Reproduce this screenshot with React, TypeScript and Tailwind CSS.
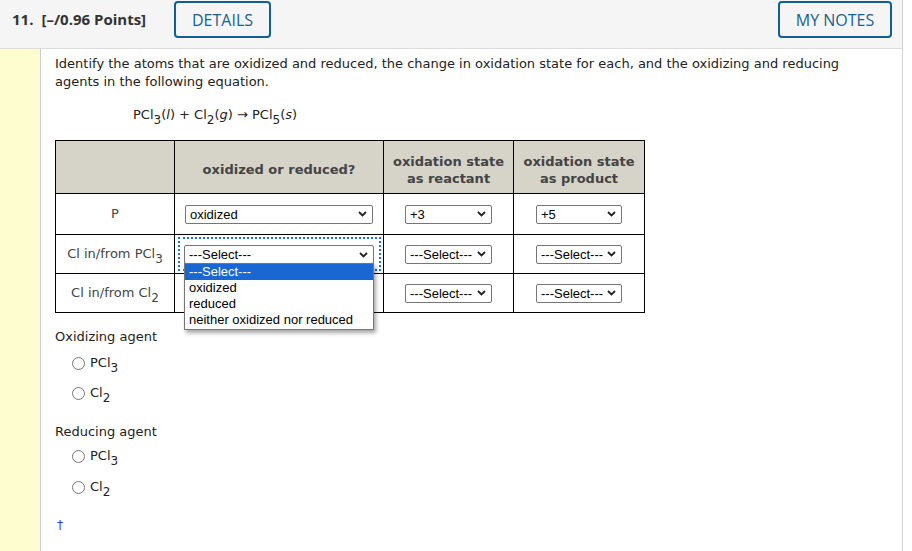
import React from "react";

const Chevron = () => (
  <svg width="9" height="6" viewBox="0 0 9 6" className="shrink-0">
    <path d="M1 1 L4.5 4.5 L8 1" fill="none" stroke="#222" strokeWidth="1.8" />
  </svg>
);

const Sub = ({ children }: { children: React.ReactNode }) => (
  <sub className="text-[12px] top-[5px] leading-none">{children}</sub>
);

function Sel({ value, w }: { value: string; w: string }) {
  return (
    <div
      className={`${w} h-[19px] border border-[#767676] rounded-[2px] bg-white flex items-center justify-between pl-[4px] pr-[5px] font-['Liberation_Sans'] text-[13px] leading-none text-black`}
    >
      <span>{value}</span>
      <Chevron />
    </div>
  );
}

const Radio = () => (
  <span className="inline-block w-[13px] h-[13px] rounded-full border border-[#767676] bg-white" />
);

export default function App() {
  return (
    <div className="w-[912px] h-[551px] bg-white overflow-hidden">
      <div className="w-[903px] h-full border-r border-[#d4d4d4] flex flex-col">
        {/* header */}
        <div className="h-[49px] shrink-0 bg-[#f5f5f5] border-b border-[#dcdcdc] flex items-start pt-[1px] pr-[10px] font-['Open_Sans']">
          <div className="w-[174px] h-[37px] flex items-center pl-[12px] text-[15px] font-bold text-[#333]">
            <span>11.</span>
            <span className="ml-[8px]">[–/0.96 Points]</span>
          </div>
          <button className="w-[97px] h-[37px] border-2 border-[#0e6196] rounded-[4px] bg-[#f5f5f5] text-[16px] text-[#1d5f8c] flex items-center justify-center">
            DETAILS
          </button>
          <div className="flex-1" />
          <button className="w-[114px] h-[37px] border-2 border-[#0e6196] rounded-[4px] bg-[#f5f5f5] text-[16px] text-[#1d5f8c] flex items-center justify-center">
            MY NOTES
          </button>
        </div>
        {/* body */}
        <div className="flex flex-1">
          <div className="w-[41px] shrink-0 bg-[#fefdd0] border-r border-[#cfcfcf]" />
          <div className="flex-1 pl-[14px] pt-[6px] text-[13px] leading-[18px] text-[#222] font-['DejaVu_Sans']">
            <p className="w-[800px]">
              Identify the atoms that are oxidized and reduced, the change in oxidation state for each, and the oxidizing and reducing agents in the following equation.
            </p>
            <div className="mt-[15px] pl-[78px]">
              PCl<Sub>3</Sub>(<i>l</i>) + Cl<Sub>2</Sub>(<i>g</i>) → PCl<Sub>5</Sub>(<i>s</i>)
            </div>
            <table className="mt-[16px] border-collapse table-fixed w-[590px] text-[#444]">
              <colgroup>
                <col className="w-[119px]" />
                <col className="w-[209px]" />
                <col className="w-[130px]" />
                <col className="w-[131px]" />
              </colgroup>
              <thead>
                <tr className="h-[53px] bg-[#d6d3c9]">
                  <th className="border border-black"></th>
                  <th className="border border-black font-bold text-[13px] leading-[17px] text-[#444] pt-[5px]">oxidized or reduced?</th>
                  <th className="border border-black font-bold text-[13px] leading-[17px] text-[#444] pt-[5px]">oxidation state<br />as reactant</th>
                  <th className="border border-black font-bold text-[13px] leading-[17px] text-[#444] pt-[5px]">oxidation state<br />as product</th>
                </tr>
              </thead>
              <tbody>
                <tr className="h-[41px]">
                  <td className="border border-black text-center">P</td>
                  <td className="border border-black">
                    <div className="flex justify-center"><Sel value="oxidized" w="w-[188px]" /></div>
                  </td>
                  <td className="border border-black">
                    <div className="flex justify-center"><Sel value="+3" w="w-[87px]" /></div>
                  </td>
                  <td className="border border-black">
                    <div className="flex justify-center"><Sel value="+5" w="w-[86px]" /></div>
                  </td>
                </tr>
                <tr className="h-[39px]">
                  <td className="border border-black text-center">
                    Cl in/from PCl<Sub>3</Sub>
                  </td>
                  <td className="border border-black">
                    <div className="relative ml-[3px] w-[203px] h-[34px] border-2 border-dotted border-[#1a73e8] pl-[4px] pt-[6px]">
                      <Sel value="---Select---" w="w-[190px]" />
                      <div className="absolute left-[4px] top-[24px] w-[190px] z-10 bg-white border border-[#767676] shadow-[2px_3px_4px_rgba(0,0,0,0.35)] font-['Liberation_Sans'] text-[13px] leading-[16px] text-black">
                        <div className="bg-[#1967d2] text-white pl-[4px]">---Select---</div>
                        <div className="pl-[4px]">oxidized</div>
                        <div className="pl-[4px]">reduced</div>
                        <div className="pl-[4px] pb-[1px]">neither oxidized nor reduced</div>
                      </div>
                    </div>
                  </td>
                  <td className="border border-black">
                    <div className="flex justify-center"><Sel value="---Select---" w="w-[87px]" /></div>
                  </td>
                  <td className="border border-black">
                    <div className="flex justify-center"><Sel value="---Select---" w="w-[86px]" /></div>
                  </td>
                </tr>
                <tr className="h-[39px]">
                  <td className="border border-black text-center">
                    Cl in/from Cl<Sub>2</Sub>
                  </td>
                  <td className="border border-black"></td>
                  <td className="border border-black">
                    <div className="flex justify-center"><Sel value="---Select---" w="w-[87px]" /></div>
                  </td>
                  <td className="border border-black">
                    <div className="flex justify-center"><Sel value="---Select---" w="w-[86px]" /></div>
                  </td>
                </tr>
              </tbody>
            </table>
            <div className="mt-[15px]">Oxidizing agent</div>
            <div className="mt-[8px] flex flex-col gap-[12px] pl-[17px]">
              <div className="flex items-center gap-[5px] h-[18px]"><Radio /><span>PCl<Sub>3</Sub></span></div>
              <div className="flex items-center gap-[5px] h-[18px]"><Radio /><span>Cl<Sub>2</Sub></span></div>
            </div>
            <div className="mt-[21px]">Reducing agent</div>
            <div className="mt-[6px] flex flex-col gap-[13px] pl-[17px]">
              <div className="flex items-center gap-[5px] h-[18px]"><Radio /><span>PCl<Sub>3</Sub></span></div>
              <div className="flex items-center gap-[5px] h-[18px]"><Radio /><span>Cl<Sub>2</Sub></span></div>
            </div>
            <div className="mt-[20px] pl-[2px] text-[#3333ff] text-[12px]">†</div>
          </div>
        </div>
      </div>
    </div>
  );
}
